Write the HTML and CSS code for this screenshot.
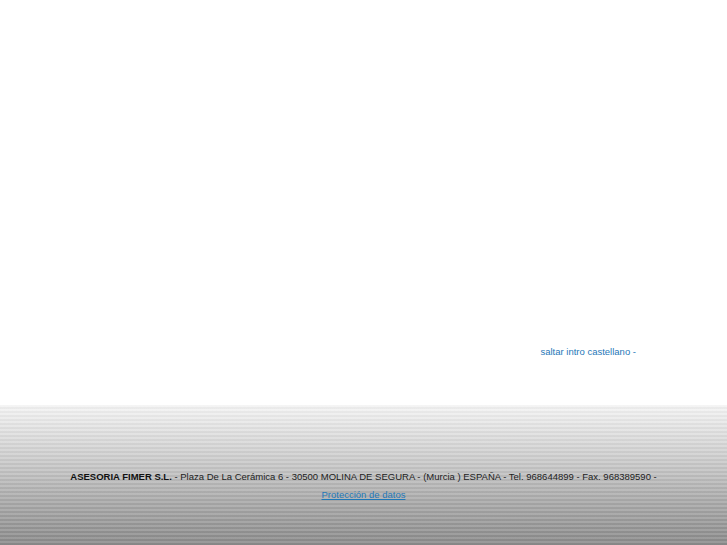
FILE: index.html
```html
<!DOCTYPE html>
<html lang="es">
<head>
  <meta charset="UTF-8" />
  <title>Asesoria Fimer</title>
  <link rel="stylesheet" href="styles.css">
</head>
<body>

  <div class="intro">
    <a class="skip" href="#">saltar intro castellano</a> -
  </div>

  <div class="footer">
    <p class="address"><b>ASESORIA FIMER S.L.</b> - Plaza De La Cerámica 6 - 30500 MOLINA DE SEGURA - (Murcia ) ESPAÑA - Tel. 968644899 - Fax. 968389590 -</p>
    <p class="legal"><a href="#">Protección de datos</a></p>
  </div>

</body>
</html>
```

FILE: styles.css
```css
body {
  margin: 0;
  background-color: #fff;
  font-family: "Liberation Sans", Arial, sans-serif;
  font-size: 9.5px;
  line-height: 12px;
  color: #222;
}
a {
  color: #1f78b8;
}
.intro {
  height: 405px;
  box-sizing: border-box;
  padding: 346px 91px 0 0;
  text-align: right;
  color: #1f78b8;
}
.intro .skip {
  text-decoration: none;
}
/* striped grey band at the bottom */
.footer {
  height: 140px;
  box-sizing: border-box;
  padding-top: 66px;
  text-align: center;
  background:
    repeating-linear-gradient(to bottom, rgba(255, 255, 255, 0.12) 0 2px, rgba(0, 0, 0, 0.03) 2px 4px),
    linear-gradient(to bottom, #f4f4f4 0%, #d0d0d0 35%, #a8a8a8 70%, #8a8a8a 100%);
}
.footer p {
  margin: 0;
}
.address b {
  color: #111;
}
.footer .legal {
  margin-top: 6px;
}
```
